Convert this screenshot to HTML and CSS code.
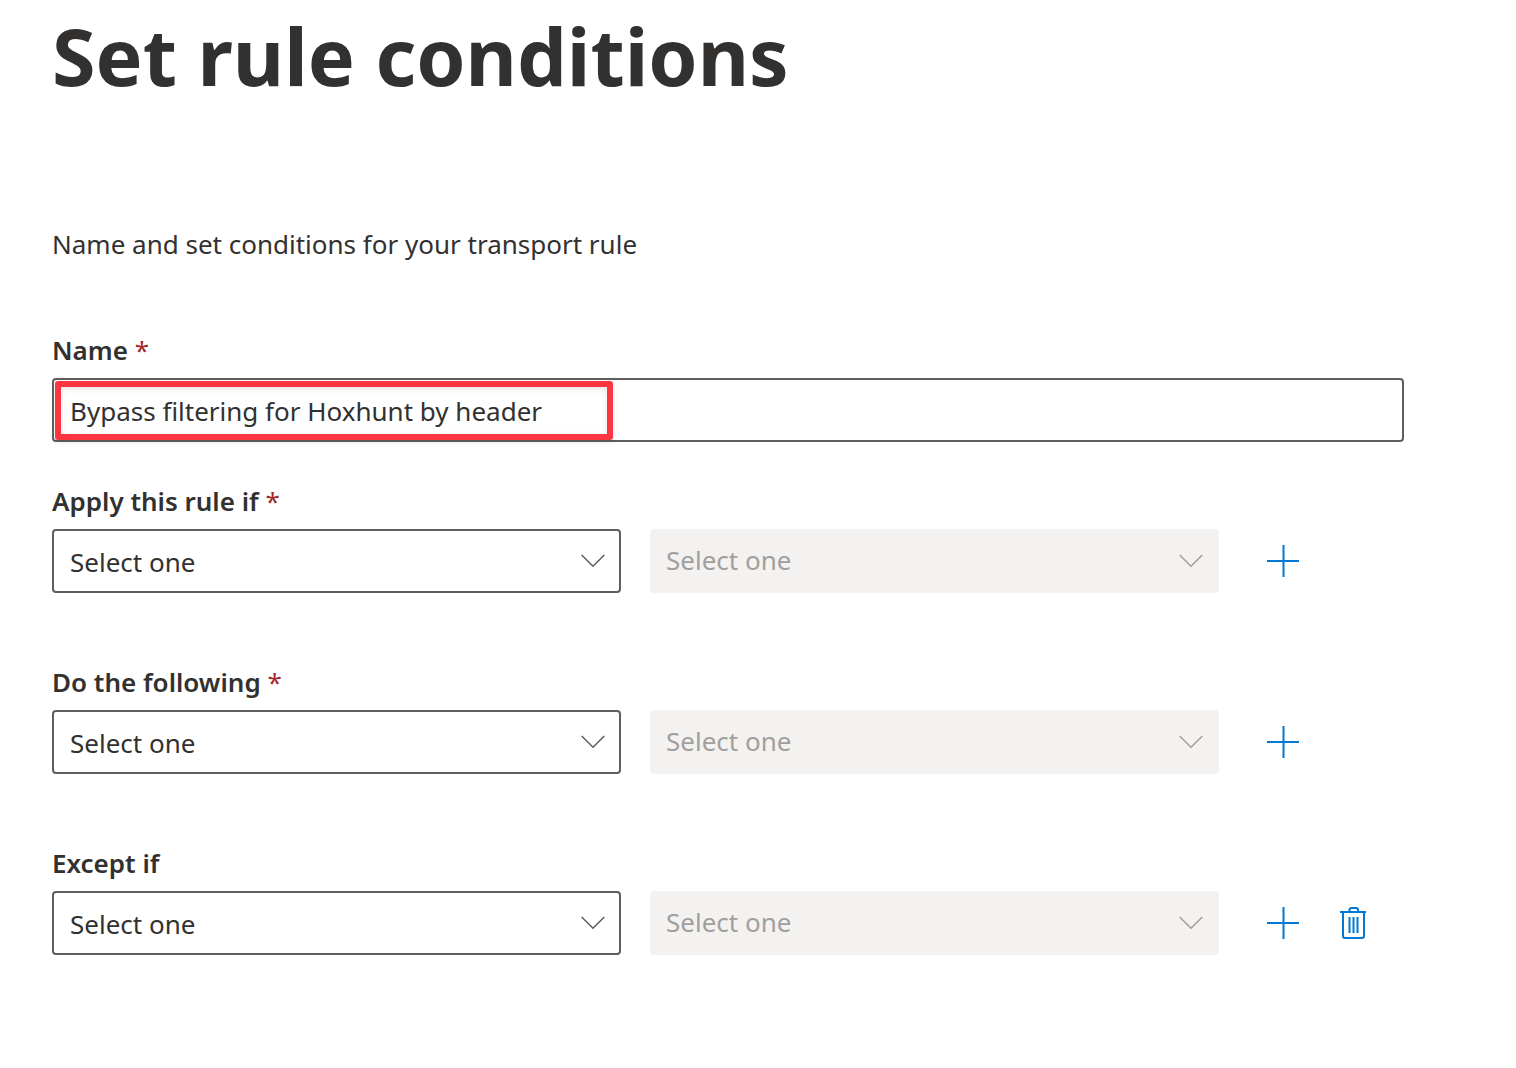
FILE: index.html
```html
<!DOCTYPE html>
<html lang="en">
<head>
    <meta charset="UTF-8">
    <meta name="viewport" content="width=device-width, initial-scale=1.0">
    <title>Set rule conditions</title>
    <link rel="stylesheet" href="styles.css">
</head>
<body>
<!-- Shared icons -->
<svg class="icon-defs" width="0" height="0" aria-hidden="true">
    <symbol id="icon-chevron" viewBox="0 0 24 14">
        <path d="M0.7 1L12 12.3L23.3 1" fill="none" stroke="currentColor" stroke-width="1.5"/>
    </symbol>
    <symbol id="icon-plus" viewBox="0 0 32 32">
        <path d="M16.500 0V32M0 16H32" fill="none" stroke="currentColor" stroke-width="2"/>
    </symbol>
    <symbol id="icon-trash" viewBox="0 0 26 32">
        <path d="M0 5H26M9.500 5V3Q9.500 1 11.500 1H16Q18 1 18 3V5M3 5V29Q3 31 5 31H22Q24 31 24 29V5M9.500 10V26M13.500 10V26M17.500 10V26" fill="none" stroke="currentColor" stroke-width="2"/>
    </symbol>
</svg>

<div class="container">
    <h1>Set rule conditions</h1>
    <p class="description">Name and set conditions for your transport rule</p>

    <form id="rule-form">
        <div class="form-group name-group">
            <label for="rule-name">Name <span class="required">*</span></label>
            <div class="name-field">
                <input type="text" id="rule-name" name="rule-name" value="Bypass filtering for Hoxhunt by header" required>
                <span class="highlight"></span>
            </div>
        </div>

        <!-- Apply this rule if -->
        <div class="form-group">
            <label for="apply-if">Apply this rule if <span class="required">*</span></label>
            <div class="condition-row">
                <div class="select-box">
                    <select id="apply-if" name="apply-if"><option>Select one</option></select>
                    <svg class="chevron"><use href="#icon-chevron"/></svg>
                </div>
                <div class="select-box">
                    <select name="apply-if-detail" aria-label="Apply this rule if, detail" disabled><option>Select one</option></select>
                    <svg class="chevron"><use href="#icon-chevron"/></svg>
                </div>
                <div class="actions">
                    <button type="button" aria-label="Add condition"><svg class="plus"><use href="#icon-plus"/></svg></button>
                </div>
            </div>
        </div>

        <!-- Do the following -->
        <div class="form-group">
            <label for="do-following">Do the following <span class="required">*</span></label>
            <div class="condition-row">
                <div class="select-box">
                    <select id="do-following" name="do-following"><option>Select one</option></select>
                    <svg class="chevron"><use href="#icon-chevron"/></svg>
                </div>
                <div class="select-box">
                    <select name="do-following-detail" aria-label="Do the following, detail" disabled><option>Select one</option></select>
                    <svg class="chevron"><use href="#icon-chevron"/></svg>
                </div>
                <div class="actions">
                    <button type="button" aria-label="Add action"><svg class="plus"><use href="#icon-plus"/></svg></button>
                </div>
            </div>
        </div>

        <!-- Except if -->
        <div class="form-group">
            <label for="except-if">Except if</label>
            <div class="condition-row">
                <div class="select-box">
                    <select id="except-if" name="except-if"><option>Select one</option></select>
                    <svg class="chevron"><use href="#icon-chevron"/></svg>
                </div>
                <div class="select-box">
                    <select name="except-if-detail" aria-label="Except if, detail" disabled><option>Select one</option></select>
                    <svg class="chevron"><use href="#icon-chevron"/></svg>
                </div>
                <div class="actions">
                    <button type="button" aria-label="Add exception"><svg class="plus"><use href="#icon-plus"/></svg></button>
                    <button type="button" aria-label="Delete exception"><svg class="trash"><use href="#icon-trash"/></svg></button>
                </div>
            </div>
        </div>
    </form>
</div>
</body>
</html>
```
FILE: styles.css
```css
* {
    box-sizing: border-box;
}

body {
    font-family: "Segoe UI", "Noto Sans", sans-serif;
    font-size: 26px;
    line-height: 40px;
    color: #323130;
    margin: 0;
    background-color: #fff;
}

.icon-defs {
    position: absolute;
}

.container {
    padding: 0 112px 48px 52px;
}

h1 {
    font-size: 79px;
    line-height: 112px;
    font-weight: 700;
    margin: 0 0 112px;
}

.description {
    margin: 0 0 66px;
}

.form-group {
    margin-bottom: 69px;
}

.name-group {
    margin-bottom: 39px;
}

.form-group label {
    display: block;
    font-weight: 600;
    margin-bottom: 8px;
}

.required {
    color: #a4262c;
    font-weight: 400;
}

input, select {
    display: block;
    width: 100%;
    height: 64px;
    padding: 2px 16px 0;
    border: 2px solid #605e5c;
    border-radius: 4px;
    background-color: #fff;
    font: inherit;
    color: #323130;
}

select {
    appearance: none;
}

select:disabled {
    border: none;
    padding-top: 0;
    padding-bottom: 2px;
    background-color: #f3f2f1;
    color: #a19f9d;
    opacity: 1;
}

.name-field, .select-box {
    position: relative;
}

/* Red frame around the rule name */
.highlight {
    position: absolute;
    top: 3px;
    left: 3px;
    width: 558px;
    height: 59px;
    border: 6px solid #fb3640;
    border-radius: 3px;
    box-shadow: 0 2px 6px rgba(0, 0, 0, 0.1), inset 0 2px 6px rgba(0, 0, 0, 0.1);
    pointer-events: none;
}

.condition-row {
    display: grid;
    grid-template-columns: 1fr 1fr 156px;
    column-gap: 29px;
}

.chevron {
    position: absolute;
    top: 25px;
    right: 16px;
    width: 24px;
    height: 14px;
    color: #605e5c;
    pointer-events: none;
}

select:disabled + .chevron {
    color: #a19f9d;
}

.actions {
    display: flex;
}

.actions button {
    display: flex;
    align-items: center;
    justify-content: center;
    width: 70px;
    height: 64px;
    padding: 0;
    border: none;
    background: none;
    color: #0078d4;
    cursor: pointer;
}

.plus {
    width: 32px;
    height: 32px;
}

.trash {
    width: 26px;
    height: 32px;
}
```
